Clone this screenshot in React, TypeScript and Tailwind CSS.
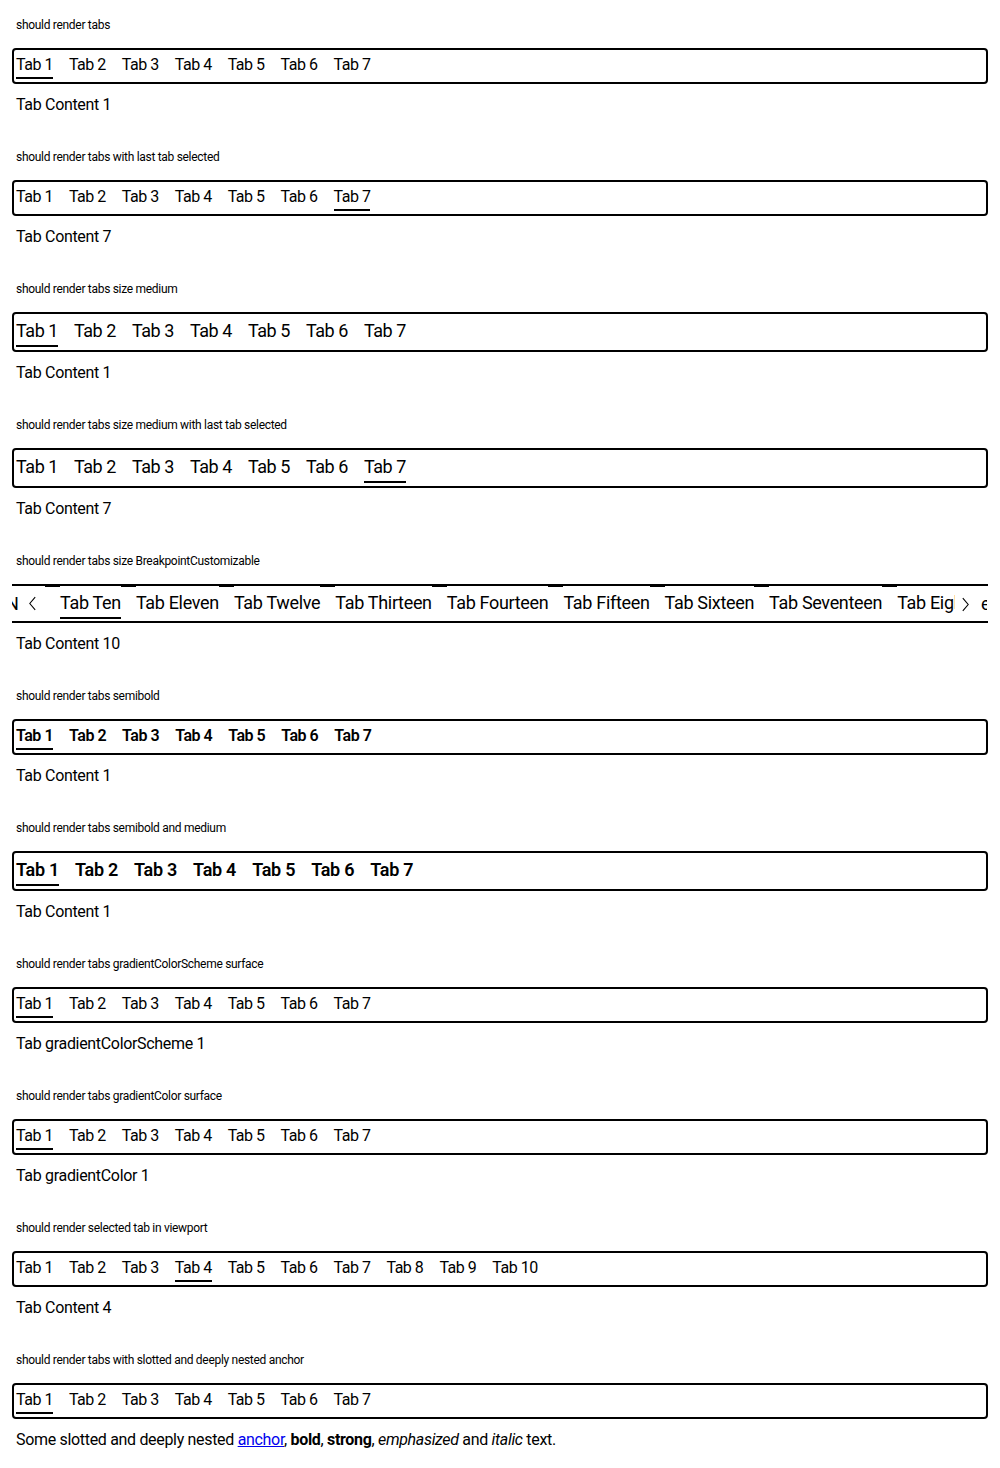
import React from 'react';

const seven = ['Tab 1', 'Tab 2', 'Tab 3', 'Tab 4', 'Tab 5', 'Tab 6', 'Tab 7'];
const ten = [...seven, 'Tab 8', 'Tab 9', 'Tab 10'];
const long = ['Tab Ten', 'Tab Eleven', 'Tab Twelve', 'Tab Thirteen', 'Tab Fourteen', 'Tab Fifteen', 'Tab Sixteen', 'Tab Seventeen', 'Tab Eighteen'];

type BarProps = {
  labels: string[];
  selected: number;
  medium?: boolean;
  semibold?: boolean;
};

function TabBar({ labels, selected, medium, semibold }: BarProps) {
  const track = medium
    ? semibold
      ? 'tracking-[-0.015em]'
      : 'tracking-[-0.025em]'
    : 'tracking-[-0.03em]';
  return (
    <div
      className={`mx-3 border-2 border-black rounded-[4px] overflow-hidden ${medium ? 'h-[40px]' : 'h-[36px]'}`}
    >
      <div className="flex items-start gap-4 pl-[2px] pt-[3px]">
        {labels.map((label, i) => (
          <div key={label} className="flex flex-col">
            <span
              className={`whitespace-nowrap ${medium ? 'text-[18px] leading-[28px]' : 'text-[16px] leading-6'} ${
                semibold ? 'font-semibold' : 'font-normal'
              } ${track}`}
            >
              {label}
            </span>
            <span className={`h-[2px] ${i === selected ? 'bg-black' : 'bg-transparent'}`} />
          </div>
        ))}
      </div>
    </div>
  );
}

function ScrollBar() {
  return (
    <div className="mx-3 relative h-[39px] border-y-2 border-black overflow-hidden tracking-[-0.02em]">
      <div className="flex items-start">
        <div className="flex items-center w-[33px] h-[35px] shrink-0">
          <span className="w-[7px] overflow-hidden text-[18px] leading-[28px] shrink-0">
            <span className="block ml-[-6px]">N</span>
          </span>
          <svg viewBox="0 0 10 16" className="w-[9px] h-[15px] ml-[9px] shrink-0" fill="none" stroke="black" strokeWidth="1.2">
            <polyline points="8,1 2,8 8,15" />
          </svg>
        </div>
        {long.map((label, i) => (
          <React.Fragment key={label}>
            <div className="w-[15px] shrink-0 border-t border-black" />
            <div className="flex flex-col shrink-0">
              <span className="whitespace-nowrap text-[18px] leading-[28px] pt-[3px]">{label}</span>
              <span className={`h-[2px] ${i === 0 ? 'bg-black' : 'bg-transparent'}`} />
            </div>
          </React.Fragment>
        ))}
      </div>
      <div className="absolute right-0 top-0 bottom-0 w-[33px] bg-white flex items-center pt-[1px]">
        <svg viewBox="0 0 10 16" className="w-[9px] h-[15px] ml-[6px] shrink-0" fill="none" stroke="black" strokeWidth="1.2">
          <polyline points="2,1 8,8 2,15" />
        </svg>
        <span className="ml-[11px] w-[6px] overflow-hidden text-[18px] leading-[28px] shrink-0">e</span>
      </div>
    </div>
  );
}

function Section({ title, children, content }: { title: string; children: React.ReactNode; content: React.ReactNode }) {
  return (
    <section className="pt-[17px] pb-[15px]">
      <p className="px-4 text-[12px] leading-4 tracking-[-0.025em]">{title}</p>
      <div className="mt-[15px]">{children}</div>
      <div className="mt-[9px] px-4 text-[16px] leading-6 tracking-[-0.02em]">{content}</div>
    </section>
  );
}

export default function App() {
  return (
    <div className="w-[1000px] bg-white text-black font-['Roboto',sans-serif]">
      <Section title="should render tabs" content="Tab Content 1">
        <TabBar labels={seven} selected={0} />
      </Section>
      <Section title="should render tabs with last tab selected" content="Tab Content 7">
        <TabBar labels={seven} selected={6} />
      </Section>
      <Section title="should render tabs size medium" content="Tab Content 1">
        <TabBar labels={seven} selected={0} medium />
      </Section>
      <Section title="should render tabs size medium with last tab selected" content="Tab Content 7">
        <TabBar labels={seven} selected={6} medium />
      </Section>
      <Section title="should render tabs size BreakpointCustomizable" content="Tab Content 10">
        <ScrollBar />
      </Section>
      <Section title="should render tabs semibold" content="Tab Content 1">
        <TabBar labels={seven} selected={0} semibold />
      </Section>
      <Section title="should render tabs semibold and medium" content="Tab Content 1">
        <TabBar labels={seven} selected={0} medium semibold />
      </Section>
      <Section title="should render tabs gradientColorScheme surface" content="Tab gradientColorScheme 1">
        <TabBar labels={seven} selected={0} />
      </Section>
      <Section title="should render tabs gradientColor surface" content="Tab gradientColor 1">
        <TabBar labels={seven} selected={0} />
      </Section>
      <Section title="should render selected tab in viewport" content="Tab Content 4">
        <TabBar labels={ten} selected={3} />
      </Section>
      <Section
        title="should render tabs with slotted and deeply nested anchor"
        content={
          <>
            Some slotted and deeply nested{' '}
            <a href="#" className="text-[#0000ee] underline">
              anchor
            </a>
            , <b className="font-bold">bold</b>, <strong className="font-bold">strong</strong>, <em>emphasized</em> and{' '}
            <i>italic</i> text.
          </>
        }
      >
        <TabBar labels={seven} selected={0} />
      </Section>
    </div>
  );
}
